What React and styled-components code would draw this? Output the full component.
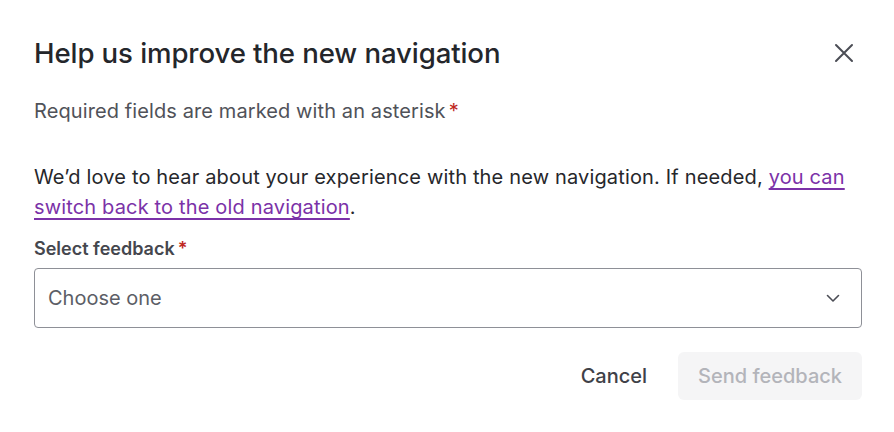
import React from 'react';
import styled, { createGlobalStyle } from 'styled-components';

const GlobalStyle = createGlobalStyle`
  body {
    margin: 0;
    padding: 0;
    background: #ffffff;
    font-family: 'Inter', 'Noto Sans', sans-serif;
    color: #26272b;
  }
`;

const Dialog = styled.div`
  width: 894px;
  height: 432px;
  box-sizing: border-box;
  padding: 34px 32px 0 34px;
  display: flex;
  flex-direction: column;
`;

const Header = styled.div`
  display: flex;
  align-items: center;
  justify-content: space-between;
  height: 38px;
`;

const Title = styled.h1`
  margin: 0;
  font-size: 27.6px;
  font-weight: 500;
  letter-spacing: -0.1px;
  color: #24262b;
`;

const CloseButton = styled.button`
  border: none;
  background: none;
  padding: 0;
  width: 24px;
  height: 24px;
  margin-right: 6px;
  display: flex;
  align-items: center;
  justify-content: center;
  color: #4b4d55;
  cursor: pointer;
`;

const Required = styled.p`
  margin: 25px 0 0;
  font-size: 20px;
  line-height: 28px;
  letter-spacing: 0.1px;
  color: #505259;
`;

const Asterisk = styled.span`
  color: #c0271f;
  margin-left: 3px;
`;

const Intro = styled.p`
  margin: 37px 0 0;
  font-size: 20px;
  line-height: 30px;
  letter-spacing: 0.16px;
  color: #26272b;
`;

const Link = styled.a`
  color: #7b32a8;
  text-decoration: underline;
  text-underline-offset: 4px;
`;

const Label = styled.label`
  display: block;
  margin-top: 15px;
  font-weight: 600;
  font-size: 18px;
  line-height: 24px;
  color: #45474e;
`;

const Select = styled.div`
  margin-top: 7px;
  height: 60px;
  box-sizing: border-box;
  border: 1px solid #8e9097;
  border-radius: 4px;
  display: flex;
  align-items: center;
  justify-content: space-between;
  padding: 0 20px 0 13px;
  font-size: 20px;
  color: #5c5e66;
`;

const Footer = styled.div`
  margin-top: 24px;
  display: flex;
  justify-content: flex-end;
  align-items: center;
  gap: 31px;
`;

const TextButton = styled.button`
  border: none;
  background: none;
  font-family: 'Inter', sans-serif;
  font-size: 20px;
  font-weight: 500;
  color: #3f4148;
  padding: 0;
`;

const PrimaryButton = styled.button`
  border: none;
  background: #f5f5f6;
  border-radius: 6px;
  height: 48px;
  padding: 0 20px;
  font-family: 'Inter', sans-serif;
  font-size: 20px;
  font-weight: 500;
  color: #b3b4ba;
`;

export default function App() {
  return (
    <>
      <GlobalStyle />
      <Dialog>
        <Header>
          <Title>Help us improve the new navigation</Title>
          <CloseButton aria-label="Close">
            <svg width="20" height="20" viewBox="0 0 20 20" fill="none" stroke="currentColor" strokeWidth="2" strokeLinecap="round">
              <path d="M2 2L18 18M18 2L2 18" />
            </svg>
          </CloseButton>
        </Header>
        <Required>
          Required fields are marked with an asterisk<Asterisk>*</Asterisk>
        </Required>
        <Intro>
          We’d love to hear about your experience with the new navigation. If needed,{' '}
          <Link href="#">you can switch back to the old navigation</Link>.
        </Intro>
        <Label>
          Select feedback<Asterisk>*</Asterisk>
        </Label>
        <Select>
          <span>Choose one</span>
          <svg width="16" height="16" viewBox="0 0 16 16" fill="none" stroke="#4b4d55" strokeWidth="1.6" strokeLinecap="round" strokeLinejoin="round">
            <path d="M2.5 5.5L8 11L13.5 5.5" />
          </svg>
        </Select>
        <Footer>
          <TextButton>Cancel</TextButton>
          <PrimaryButton disabled>Send feedback</PrimaryButton>
        </Footer>
      </Dialog>
    </>
  );
}
